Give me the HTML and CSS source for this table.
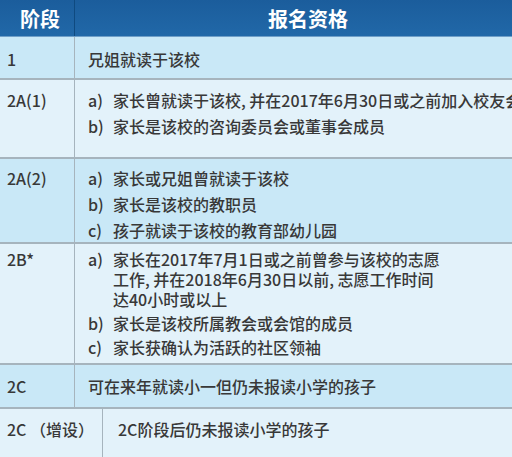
FILE: index.html
```html
<!DOCTYPE html>
<html lang="zh">
<head>
<meta charset="utf-8">
<link rel="stylesheet" href="styles.css">
</head>
<body>
<div class="table">
  <div class="row head">
    <div class="c1">阶段</div>
    <div class="c2">报名资格</div>
  </div>
  <div class="row blue r1">
    <div class="c1">1</div>
    <div class="c2">兄姐就读于该校</div>
  </div>
  <div class="row pale r2a1">
    <div class="c1">2A(1)</div>
    <div class="c2">
      <div class="item"><span class="m">a)</span><span>家长曾就读于该校, 并在2017年6月30日或之前加入校友会</span></div>
      <div class="item"><span class="m">b)</span><span>家长是该校的咨询委员会或董事会成员</span></div>
    </div>
  </div>
  <div class="row blue r2a2">
    <div class="c1">2A(2)</div>
    <div class="c2">
      <div class="item"><span class="m">a)</span><span>家长或兄姐曾就读于该校</span></div>
      <div class="item"><span class="m">b)</span><span>家长是该校的教职员</span></div>
      <div class="item"><span class="m">c)</span><span>孩子就读于该校的教育部幼儿园</span></div>
    </div>
  </div>
  <div class="row pale r2b">
    <div class="c1">2B*</div>
    <div class="c2">
      <div class="item"><span class="m">a)</span><span class="wrap">家长在2017年7月1日或之前曾参与该校的志愿<br>工作, 并在2018年6月30日以前, 志愿工作时间<br>达40小时或以上</span></div>
      <div class="item"><span class="m">b)</span><span>家长是该校所属教会或会馆的成员</span></div>
      <div class="item"><span class="m">c)</span><span>家长获确认为活跃的社区领袖</span></div>
    </div>
  </div>
  <div class="row blue r2c">
    <div class="c1">2C</div>
    <div class="c2">可在来年就读小一但仍未报读小学的孩子</div>
  </div>
  <div class="row pale last">
    <div class="c1 wide">2C （增设）</div>
    <div class="c2 narrow">2C阶段后仍未报读小学的孩子</div>
  </div>
</div>
</body>
</html>
```
FILE: styles.css
```css
html, body {
  margin: 0;
  padding: 0;
  background: #e4f2fa;
}
body {
  width: 512px;
  height: 457px;
  overflow: hidden;
  font-family: "Noto Sans CJK SC", "Noto Sans", sans-serif;
  color: #383838;
}
.table {
  width: 512px;
  display: flex;
  flex-direction: column;
}
.row {
  display: flex;
  border-top: 2px solid #a6b4bd;
  box-sizing: border-box;
}
.c1 {
  width: 75px;
  flex: none;
  box-sizing: border-box;
  padding-left: 7px;
  border-right: 1px solid #a6b4bd;
  font-size: 16px;
  font-weight: 500;
  line-height: 20px;
}
.c2 {
  flex: 1;
  min-width: 0;
  overflow: hidden;
  padding-left: 13px;
  font-size: 16px;
  font-weight: 500;
  line-height: 20px;
  white-space: nowrap;
}
.head {
  height: 37px;
  border-top: none;
  background: linear-gradient(#1b5d9c, #2168a8);
  border-bottom: 1px solid #6f9fc8;
  color: #ffffff;
}
.head .c1, .head .c2 {
  font-size: 20px;
  font-weight: 700;
  line-height: 37px;
  border-right-color: #0f4a80;
}
.head .c1 { padding-left: 20px; }
.head .c2 { padding-left: 193px; }
.blue { background: #c9e8f7; }
.pale { background: #e3f2fa; }
.r1 { height: 41px; border-top: none; }
.r1 .c1, .r1 .c2 { padding-top: 12px; }
.r2a1 { height: 79px; }
.r2a1 .c1, .r2a1 .c2 { padding-top: 10px; }
.r2a2 { height: 85px; }
.r2a2 .c1, .r2a2 .c2 { padding-top: 9px; }
.r2b { height: 121px; }
.r2b .c1, .r2b .c2 { padding-top: 5px; }
.r2b .item { margin-bottom: 4px; }
.r2c { height: 44px; }
.r2c .c1, .r2c .c2 { padding-top: 11px; }
.last { height: 50px; }
.last .c1, .last .c2 { padding-top: 10px; }
.c1.wide { width: 103px; }
.c2.narrow { padding-left: 15px; }
.item {
  display: flex;
  margin-bottom: 6px;
}
.item .wrap { line-height: 20px; }
.item .m {
  width: 25px;
  flex: none;
}
```
